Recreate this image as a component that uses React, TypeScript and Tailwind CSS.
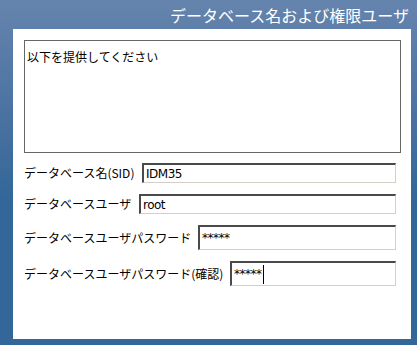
import React from "react";

const jp = { fontFamily: '"Noto Sans CJK JP", "Noto Sans", sans-serif' };

function Field({
  label,
  labelW,
  h,
  value,
  caret,
}: {
  label: string;
  labelW: string;
  h: string;
  value: string;
  caret?: boolean;
}) {
  return (
    <div className="flex items-center">
      <div className={`${labelW} shrink-0 whitespace-nowrap text-[12px] leading-[14px] text-black`} style={jp}>
        {label}
      </div>
      <div
        className={`${h} flex-1 flex items-center bg-white border-t-2 border-l-2 border-b border-r border-t-[#4a4a4a] border-l-[#4a4a4a] border-b-[#d4d0c8] border-r-[#d4d0c8] pl-[2px]`}
      >
        <span
          className="text-[12px] leading-[14px] text-black"
          style={{ fontFamily: '"DejaVu Sans", "Liberation Sans", sans-serif', letterSpacing: "-0.5px" }}
        >
          {value}
        </span>
        {caret && <span className="ml-[1px] w-[1px] h-[19px] bg-black" />}
      </div>
    </div>
  );
}

export default function App() {
  return (
    <div className="w-[417px] h-[345px] overflow-hidden bg-[linear-gradient(180deg,#6584ad_0%,#4d74a2_30%,#336699_58%,#336699_100%)] flex flex-col">
      <div className="h-[29px] flex items-center justify-end pr-[8px]">
        <span className="text-white text-[16px] leading-[20px]" style={jp}>
          データベース名および権限ユーザ
        </span>
      </div>
      <div className="ml-[13px] w-[398px] h-[310px] bg-white pt-[11px] pl-[11px] pr-[15px]">
        <div className="w-[377px] h-[113px] border border-[#666666] pl-[2px] pt-[3px]">
          <span className="text-[12px] leading-[14px] text-black" style={jp}>
            以下を提供してください
          </span>
        </div>
        <div className="mt-[10px] flex flex-col gap-[11px]">
          <Field label="データベース名(SID)" labelW="w-[118px]" h="h-[20px]" value="IDM35" />
          <Field label="データベースユーザ" labelW="w-[115px]" h="h-[20px]" value="root" />
          <Field label="データベースユーザパスワード" labelW="w-[174px]" h="h-[25px]" value="*****" />
          <Field label="データベースユーザパスワード(確認)" labelW="w-[206px]" h="h-[25px]" value="*****" caret />
        </div>
      </div>
    </div>
  );
}
